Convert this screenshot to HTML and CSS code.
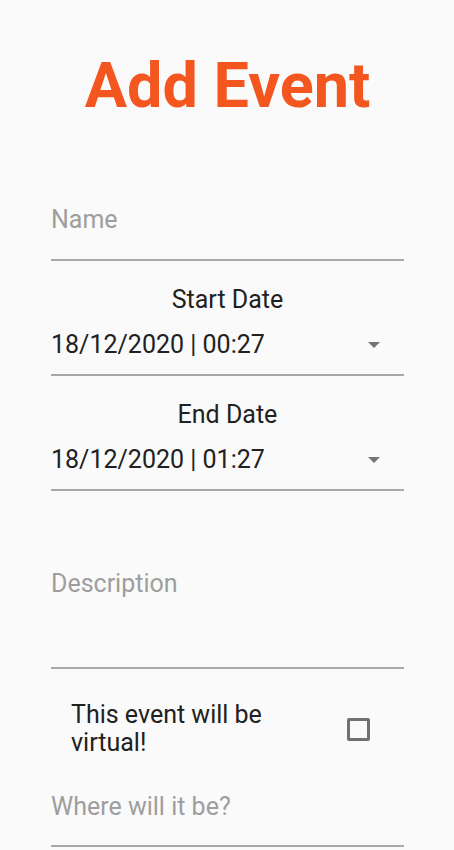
FILE: index.html
```html
<!DOCTYPE html>
<html>
<head>
<meta charset="utf-8">
<link rel="stylesheet" href="styles.css">
</head>
<body>
<div class="page">
  <h1 class="title">Add Event</h1>
  <div class="field name-field">
    <span class="placeholder">Name</span>
  </div>
  <div class="date-block">
    <div class="date-label">Start Date</div>
    <div class="field date-field">
      <span class="value">18/12/2020 | 00:27</span>
      <span class="arrow"></span>
    </div>
  </div>
  <div class="date-block">
    <div class="date-label">End Date</div>
    <div class="field date-field">
      <span class="value">18/12/2020 | 01:27</span>
      <span class="arrow"></span>
    </div>
  </div>
  <div class="field desc-field">
    <span class="placeholder">Description</span>
  </div>
  <div class="check-row">
    <span class="check-text">This event will be virtual!</span>
    <span class="checkbox"></span>
  </div>
  <div class="field where-field">
    <span class="placeholder">Where will it be?</span>
  </div>
</div>
</body>
</html>
```

FILE: styles.css
```css
html, body {
  margin: 0;
  padding: 0;
  background: #fafafa;
  font-family: Roboto, "Noto Sans", sans-serif;
}
.page {
  display: flex;
  flex-direction: column;
  padding: 0 50px 0 51px;
}
.title {
  margin: 49px 0 0;
  text-align: center;
  color: #f4561f;
  font-size: 63px;
  font-weight: 700;
  line-height: 74px;
}
.field {
  border-bottom: 2px solid #a8a8a8;
  display: flex;
  align-items: center;
}
.placeholder {
  color: #9e9e9e;
  font-size: 25px;
  line-height: 30px;
}
.name-field {
  margin-top: 82px;
  padding-bottom: 24px;
}
.date-block {
  display: flex;
  flex-direction: column;
}
.date-label {
  text-align: center;
  font-size: 25px;
  color: #212121;
  margin-top: 24px;
  line-height: 30px;
}
.date-field {
  justify-content: space-between;
  padding: 15px 0 14px;
}
.value {
  font-size: 25px;
  color: #212121;
  line-height: 30px;
}
.arrow {
  width: 0;
  height: 0;
  border-left: 6px solid transparent;
  border-right: 6px solid transparent;
  border-top: 6px solid #757575;
  margin-right: 24px;
}
.desc-field {
  margin-top: 78px;
  padding-bottom: 68px;
}
.check-row {
  display: flex;
  align-items: center;
  justify-content: space-between;
  padding: 32px 34px 0 20px;
}
.check-text {
  font-size: 25px;
  color: #212121;
  line-height: 28px;
  width: 240px;
}
.checkbox {
  box-sizing: border-box;
  width: 23px;
  height: 23px;
  border: 3px solid #707070;
  border-radius: 2px;
}
.where-field {
  margin-top: 35px;
  padding-bottom: 23px;
}
```
